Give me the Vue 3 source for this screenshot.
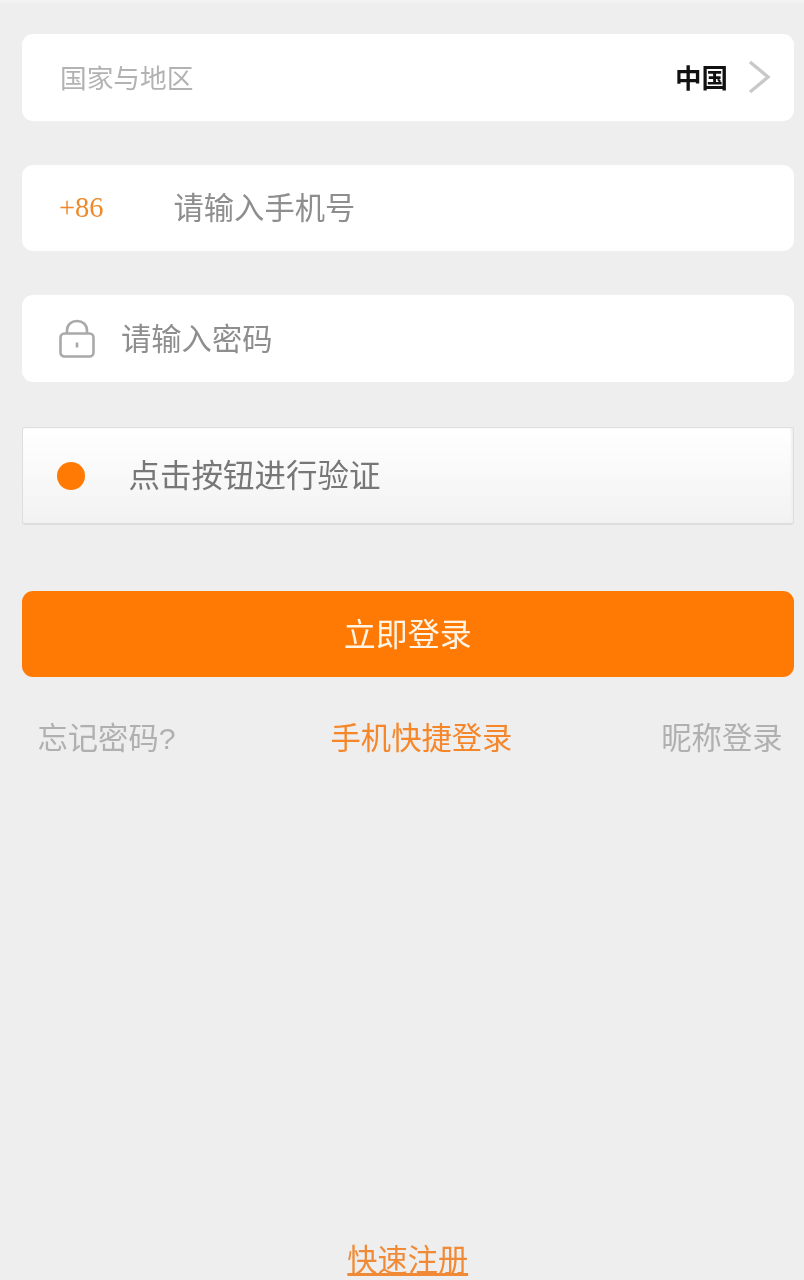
<script setup>
const links = { forgot: '忘记密码?', quick: '手机快捷登录', nick: '昵称登录' }
</script>

<template>
  <div class="page">
    <div class="row region">
      <span class="region-label">国家与地区</span>
      <span class="region-value">中国</span>
      <svg class="chevron" viewBox="0 0 24 34" fill="none" stroke="#c9c9c9" stroke-width="3.400">
        <path d="M2 2l18 15L2 32" />
      </svg>
    </div>

    <div class="row phone">
      <span class="code">+86</span>
      <span class="hint">请输入手机号</span>
    </div>

    <div class="row password">
      <svg class="lock" viewBox="0 0 38 40" fill="none" stroke="#a9a9a9" stroke-width="2.600">
        <path d="M9 15V11.500C9 5.500 13.500 2 19 2s10 3.500 10 9.500V15" />
        <rect x="2.500" y="14.500" width="33" height="23" rx="4" />
        <path d="M19 23.500v5" stroke-width="2.600" />
      </svg>
      <span class="hint">请输入密码</span>
    </div>

    <div class="verify">
      <span class="dot"></span>
      <span class="verify-text">点击按钮进行验证</span>
    </div>

    <button class="login"><span class="login-text">立即登录</span></button>

    <div class="links">
      <span class="link-gray">{{ links.forgot }}</span>
      <span class="link-orange">{{ links.quick }}</span>
      <span class="link-gray last">{{ links.nick }}</span>
    </div>

    <a class="register">快速注册</a>
  </div>
</template>

<style scoped>
.page {
  box-sizing: border-box;
  height: 1280px;
  padding: 34px 10px 0 21.500px;
  display: flex;
  flex-direction: column;
  background: linear-gradient(#f3f3f3, #eeeeee 5px);
  font-family: "Liberation Sans", "Noto Sans CJK SC", sans-serif;
  overflow: hidden;
  filter: blur(0.45px);
}

.row {
  display: flex;
  align-items: center;
  height: 87px;
  flex-shrink: 0;
  background: #fff;
  border-radius: 11px;
}

.region {
  padding: 0 22px 0 38.500px;
}

.region-label {
  padding-bottom: 3px;
  font-size: 26.700px;
  color: #b2b2b2;
}

.region-value {
  margin-left: auto;
  padding-bottom: 3px;
  font-size: 26.500px;
  font-weight: 700;
  color: #111;
}

.chevron {
  width: 24px;
  height: 34px;
  margin-left: 20px;
  margin-bottom: 1px;
}

.phone {
  margin-top: 44px;
  height: 86px;
  padding-left: 37.500px;
}

.code {
  width: 114.500px;
  font-family: "Liberation Serif", serif;
  font-size: 28.500px;
  color: #ee8a2c;
}

.hint {
  padding-bottom: 4px;
  font-size: 30.300px;
  color: #8e8e8e;
}

.password {
  margin-top: 44px;
  padding-left: 36.500px;
}

.lock {
  width: 38px;
  height: 40px;
  margin-right: 25px;
}

.verify {
  box-sizing: border-box;
  display: flex;
  align-items: center;
  flex-shrink: 0;
  height: 98px;
  margin-top: 45px;
  padding-left: 34px;
  border: 1px solid #dedede;
  border-bottom-width: 2px;
  border-radius: 3px;
  background: linear-gradient(#ffffff, #f2f2f2);
  box-shadow: inset -2px 0 2px #f0f0f0;
}

.dot {
  width: 28px;
  height: 28px;
  border-radius: 50%;
  background: #ff7a05;
}

.verify-text {
  margin-left: 44px;
  padding-bottom: 5px;
  font-size: 31.500px;
  color: #777;
}

.login {
  flex-shrink: 0;
  height: 86px;
  margin-top: 66px;
  padding: 0;
  border: none;
  border-radius: 11px;
  background: #ff7a05;
  color: #fff3e4;
  font-family: inherit;
  font-size: 32px;
}

.login-text {
  display: block;
  padding-bottom: 4px;
}

.links {
  display: flex;
  align-items: center;
  margin-top: 41px;
  padding: 0 11.500px 0 16px;
  font-size: 30.300px;
  line-height: 42px;
}

.link-gray {
  color: #b0b0b0;
}

.link-orange {
  margin-left: 155px;
  color: #f5872a;
}

.last {
  margin-left: auto;
}

.register {
  margin-top: auto;
  margin-bottom: 1px;
  align-self: center;
  font-size: 30.200px;
  line-height: 36px;
  color: #f08a36;
  text-decoration: underline;
}
</style>

<style>
html, body {
  margin: 0;
  background: #eeeeee;
}
</style>
